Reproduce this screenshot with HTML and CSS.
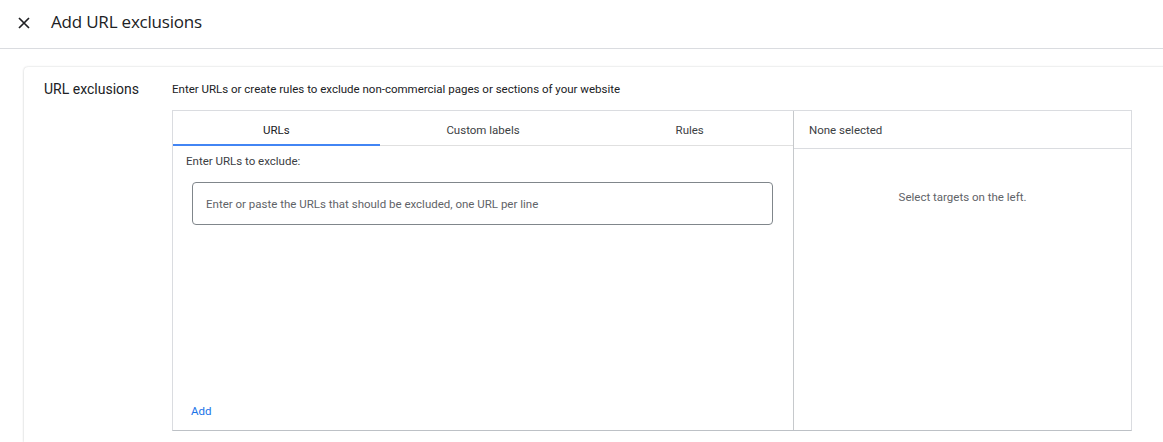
FILE: index.html
```html
<!DOCTYPE html>
<html>
<head>
<meta charset="utf-8">
<link rel="stylesheet" href="styles.css">
</head>
<body>
<header class="topbar">
  <button class="close" aria-label="Close">
    <svg width="12" height="12" viewBox="0 0 12 12"><path d="M1 1L11 11M11 1L1 11" stroke="#202124" stroke-width="1.7" fill="none"/></svg>
  </button>
  <h1 class="title">Add URL exclusions</h1>
</header>
<main class="content">
  <section class="card">
    <div class="label">URL exclusions</div>
    <div class="body">
      <p class="desc">Enter URLs or create rules to exclude non-commercial pages or sections of your website</p>
      <div class="picker">
        <div class="left">
          <div class="tabs">
            <div class="tab active">URLs</div>
            <div class="tab">Custom labels</div>
            <div class="tab">Rules</div>
          </div>
          <div class="pane">
            <div class="hint">Enter URLs to exclude:</div>
            <div class="textarea">Enter or paste the URLs that should be excluded, one URL per line</div>
            <div class="spacer"></div>
            <a class="add">Add</a>
          </div>
        </div>
        <div class="right">
          <div class="rhead">None selected</div>
          <div class="rbody">Select targets on the left.</div>
        </div>
      </div>
    </div>
  </section>
</main>
</body>
</html>
```
FILE: styles.css
```css
* { box-sizing: border-box; }
html, body { margin: 0; padding: 0; background: #fff; }
body {
  font-family: Roboto, "Liberation Sans", sans-serif;
  color: #3c4043;
  width: 1163px;
  height: 442px;
  overflow: hidden;
}
.topbar {
  height: 49px;
  display: flex;
  align-items: center;
  border-bottom: 1px solid #dadce0;
  padding-left: 18px;
}
.close {
  border: 0;
  background: none;
  padding: 0;
  width: 12px;
  height: 12px;
  display: flex;
  margin-top: -3px;
}
.title {
  margin: -5px 0 0 21px;
  font-family: "Open Sans", Roboto, sans-serif;
  font-weight: 400;
  font-size: 17px;
  color: #202124;
  letter-spacing: -0.2px;
}
.content {
  padding: 18px 0 0 24px;
}
.card {
  display: flex;
  width: 1160px;
  height: 375px;
  border-radius: 4px 0 0 0;
  box-shadow: 0 0 2px rgba(60,64,67,0.25), 0 1px 3px rgba(60,64,67,0.08);
  padding: 13px 0 0 20px;
}
.label {
  width: 128px;
  font-size: 14px;
  color: #202124;
  line-height: 18px;
}
.body { display: flex; flex-direction: column; }
.desc {
  margin: 1px 0 13px;
  font-size: 11.5px;
  line-height: 16px;
  color: #202124;
}
.picker {
  display: flex;
  width: 960px;
  height: 321px;
  border: 1px solid #dadce0;
  border-bottom-color: #bdc1c6;
}
.left {
  width: 621px;
  display: flex;
  flex-direction: column;
  border-right: 1px solid #c6c9cc;
}
.tabs {
  display: flex;
  height: 35px;
  border-bottom: 1px solid #e0e0e0;
}
.tab {
  flex: 1;
  display: flex;
  align-items: center;
  justify-content: center;
  padding-top: 4px;
  font-size: 11.5px;
  color: #3c4043;
}
.tab.active {
  color: #202124;
  border-bottom: 2px solid #4285f4;
  margin-bottom: -1px;
}
.pane {
  flex: 1;
  display: flex;
  flex-direction: column;
  padding: 7px 20px 11px 13px;
}
.hint {
  font-size: 11.5px;
  line-height: 16px;
  color: #3c4043;
}
.textarea {
  margin: 13px 0 0 6px;
  height: 43px;
  border: 1px solid #80868b;
  border-radius: 4px;
  display: flex;
  align-items: center;
  padding-left: 13px;
  font-size: 11.5px;
  color: #5f6368;
}
.spacer { flex: 1; }
.add {
  margin-left: 5px;
  font-size: 11.5px;
  color: #1a73e8;
  line-height: 16px;
}
.right {
  flex: 1;
  display: flex;
  flex-direction: column;
}
.rhead {
  height: 38px;
  border-bottom: 1px solid #dadce0;
  display: flex;
  align-items: center;
  padding-left: 15px;
  font-size: 11.5px;
  color: #3c4043;
}
.rbody {
  text-align: center;
  padding-top: 41px;
  font-size: 11.5px;
  color: #5f6368;
}
```
